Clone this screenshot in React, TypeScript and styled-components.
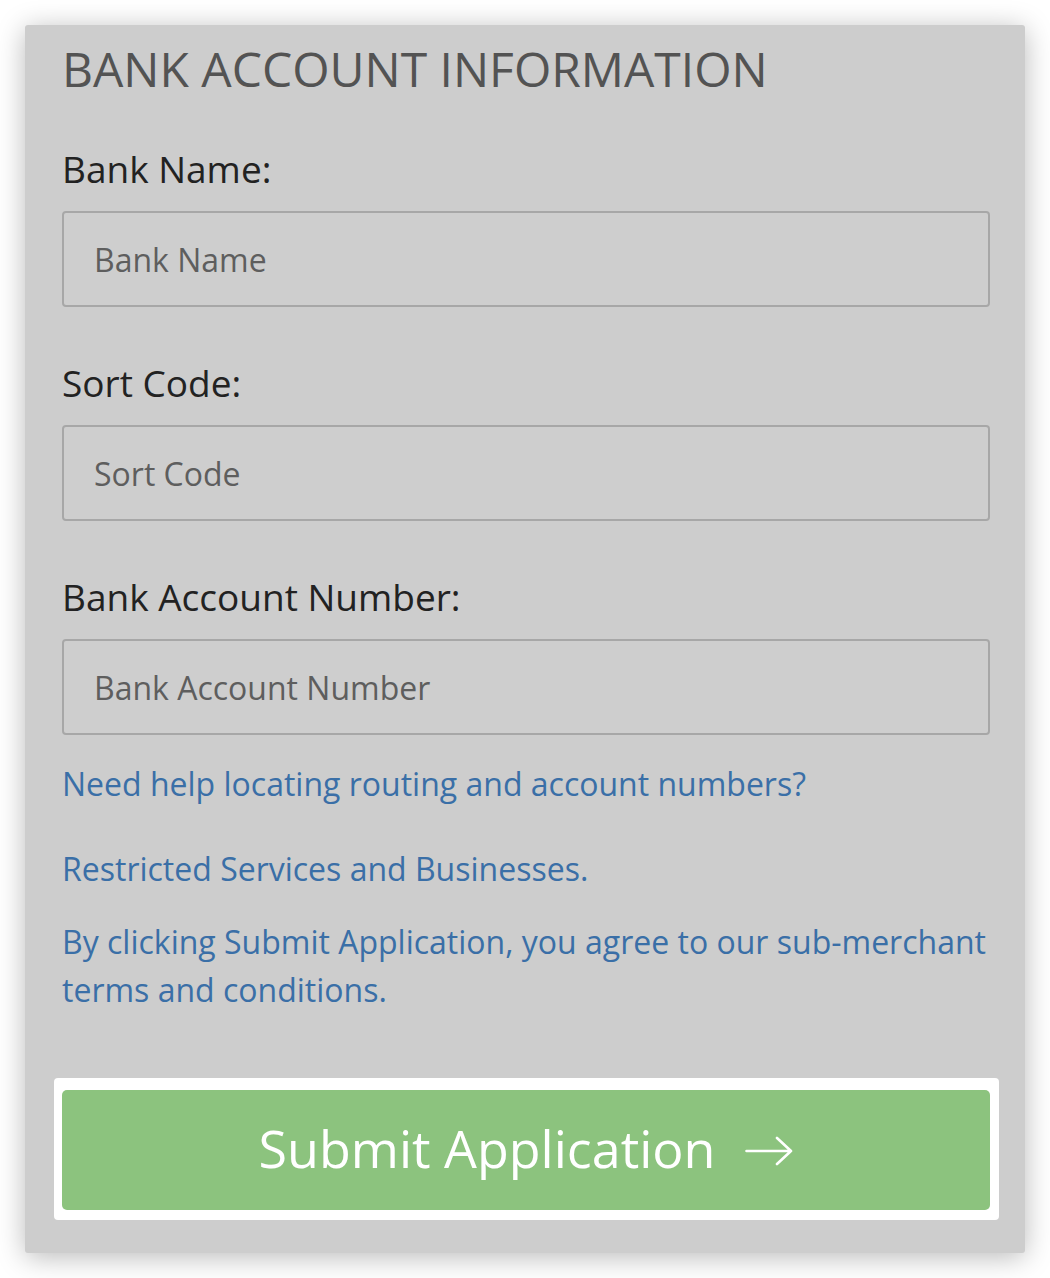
import React from "react";
import styled, { createGlobalStyle } from "styled-components";

const GlobalStyle = createGlobalStyle`
  html, body {
    margin: 0;
    padding: 0;
    background: #ffffff;
  }
  body {
    font-family: "Open Sans", "Noto Sans", "Liberation Sans", sans-serif;
  }
`;

const Page = styled.div`
  padding: 25px;
`;

const Card = styled.div`
  width: 1000px;
  box-sizing: border-box;
  background: #cdcdcd;
  border-radius: 3px;
  padding: 14px 35px 33px 37px;
  box-shadow: 0 4px 28px rgba(0, 0, 0, 0.28);
`;

const Heading = styled.h2`
  margin: 0 0 48px;
  font-size: 48px;
  line-height: 60px;
  font-weight: 400;
  color: #535353;
`;

const Field = styled.div<{ last?: boolean }>`
  display: flex;
  flex-direction: column;
  gap: 20px;
  margin-bottom: ${({ last }) => (last ? 25 : 54)}px;
`;

const Label = styled.label`
  font-size: 37px;
  line-height: 44px;
  color: #222222;
`;

const Input = styled.input`
  box-sizing: border-box;
  width: 100%;
  height: 96px;
  padding: 0 30px;
  background: #cecece;
  border: 2px solid #a7a7a7;
  border-radius: 4px;
  font-family: inherit;
  font-size: 32px;
  color: #333;
  outline: none;

  &::placeholder {
    color: #5e5e5e;
  }
`;

const Note = styled.p<{ gap: number }>`
  margin: 0 0 ${({ gap }) => gap}px;
  font-size: 32px;
  line-height: 48px;
  color: #3a6fa7;
`;

const Link = styled.a`
  color: inherit;
  text-decoration: none;
`;

const ButtonFrame = styled.div`
  margin: 0 -9px 0 -8px;
  padding: 12px 9px 10px 8px;
  background: #ffffff;
  border-radius: 4px;
`;

const SubmitButton = styled.button`
  width: 100%;
  height: 120px;
  display: flex;
  align-items: center;
  justify-content: center;
  gap: 30px;
  padding: 0 0 6px;
  background: #8cc37e;
  border: none;
  border-radius: 5px;
  font-family: inherit;
  font-size: 52px;
  color: #ffffff;
  cursor: pointer;
`;

const ArrowIcon = styled.svg`
  margin-top: 8px;
  flex-shrink: 0;
`;

const Arrow = () => (
  <ArrowIcon width="48" height="30" viewBox="0 0 48 30" fill="none">
    <path
      d="M1.5 15 H46 M32 2 L46 15 L32 28"
      stroke="#ffffff"
      strokeWidth="2.6"
      strokeLinecap="round"
      strokeLinejoin="round"
    />
  </ArrowIcon>
);

const fields = ["Bank Name", "Sort Code", "Bank Account Number"];

export default function App() {
  return (
    <>
      <GlobalStyle />
      <Page>
        <Card>
          <Heading>BANK ACCOUNT INFORMATION</Heading>
          {fields.map((name, i) => (
            <Field key={name} last={i === fields.length - 1}>
              <Label>{name}:</Label>
              <Input placeholder={name} />
            </Field>
          ))}
          <Note gap={37}>
            <Link href="#">Need help locating routing and account numbers?</Link>
          </Note>
          <Note gap={25}>
            <Link href="#">Restricted Services and Businesses.</Link>
          </Note>
          <Note gap={64}>
            By clicking Submit Application, you agree to our sub-merchant terms
            and conditions.
          </Note>
          <ButtonFrame>
            <SubmitButton>
              Submit Application
              <Arrow />
            </SubmitButton>
          </ButtonFrame>
        </Card>
      </Page>
    </>
  );
}
